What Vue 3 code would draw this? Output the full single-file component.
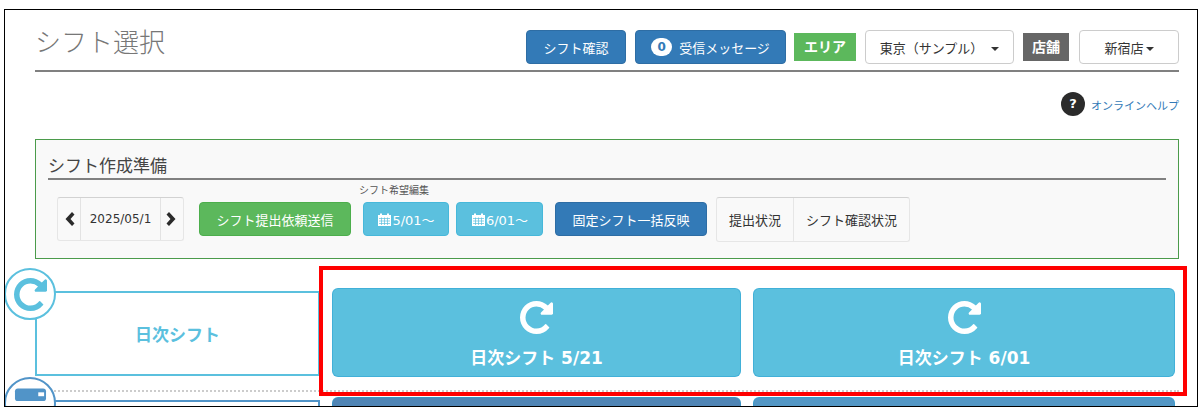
<template>
  <div class="frame">
    <header class="page-head">
      <h1>シフト選択</h1>
      <div class="head-tools">
        <button class="btn primary tool">シフト確認</button>
        <button class="btn primary tool msg"><span class="badge">0</span>受信メッセージ</button>
        <span class="tag green">エリア</span>
        <button class="btn plain area">東京（サンプル）<i class="caret"></i></button>
        <span class="tag gray">店舗</span>
        <button class="btn plain store">新宿店<i class="caret near"></i></button>
      </div>
    </header>

    <div class="help">
      <span class="help-mark">?</span>
      <a class="help-link">オンラインヘルプ</a>
    </div>

    <section class="prep">
      <h2>シフト作成準備</h2>
      <div class="prep-row">
        <div class="pager">
          <span class="cell arrow">
            <svg viewBox="0 0 12 16" width="12" height="16"><path d="M9 1 2.5 8 9 15l2.5-2.5L7.5 8l4-4.500z" /></svg>
          </span>
          <span class="cell date">2025/05/1</span>
          <span class="cell arrow">
            <svg viewBox="0 0 12 16" width="12" height="16"><path d="M3 1 9.500 8 3 15 .5 12.500 4.500 8l-4-4.500z" /></svg>
          </span>
        </div>
        <button class="btn success send">シフト提出依頼送信</button>
        <div class="hope">
          <div class="hope-label">シフト希望編集</div>
          <div class="hope-btns">
            <button v-for="d in hopeDates" :key="d" class="btn info hope-btn">
              <svg class="cal" viewBox="0 0 15 15" width="15" height="15">
                <path d="M1 3h2V1.500h2V3h5V1.500h2V3h2v11H1z" fill="#fff" />
                <path d="M2 6.500h11M2 9h11M2 11.500h11M4.500 5.500V13M7.500 5.500V13M10.500 5.500V13" stroke="#5bc0de" stroke-width=".7" fill="none" />
              </svg>{{ d }}
            </button>
          </div>
        </div>
        <button class="btn primary bulk">固定シフト一括反映</button>
        <div class="status">
          <span class="status-cell first">提出状況</span>
          <span class="status-cell">シフト確認状況</span>
        </div>
      </div>
    </section>

    <div v-for="row in rows" :key="row.name" class="shift-row" :class="row.kind">
      <div class="row-box">
        <span class="row-circle">
          <svg v-if="row.kind === 'daily'" viewBox="128 128 1536 1536" width="33" height="33"><path :d="repeatPath" /></svg>
          <svg v-else viewBox="0 0 34 34" width="33" height="34">
            <rect x="1" y="2" width="32" height="13" rx="3" />
            <rect x="1" y="20" width="32" height="13" rx="3" />
            <rect x="25" y="6" width="6" height="4" fill="#fff" />
            <rect x="17" y="24" width="14" height="4" fill="#fff" />
          </svg>
        </span>
        {{ row.name }}
      </div>
      <button v-for="b in row.buttons" :key="b.label" class="big-btn" :style="{ background: b.color }">
        <svg viewBox="128 128 1536 1536" width="33" height="33"><path :d="repeatPath" fill="#fff" /></svg>
        <span>{{ b.label }}</span>
      </button>
    </div>

    <div class="marker"></div>
  </div>
</template>

<script setup>
const repeatPath = 'M1664 256v448q0 26-19 45t-45 19h-448q-42 0-59-40-17-39 14-69l138-138q-148-137-349-137-104 0-198.500 40.500t-163.500 109.500-109.500 163.500-40.500 198.500 40.500 198.500 109.500 163.500 163.500 109.500 198.500 40.500q119 0 225-52t179-147q7-10 23-12 15 0 25 9l137 138q9 8 9.500 20.500t-7.500 22.500q-109 132-264 204.500t-327 72.500q-156 0-298-61t-245-164-164-245-61-298 61-298 164-245 245-164 298-61q147 0 284.500 55.500t244.500 156.500l130-129q29-31 70-14 39 17 39 59z'

const hopeDates = ['5/01～', '6/01～']

const rows = [
  {
    name: '日次シフト',
    kind: 'daily',
    buttons: [
      { label: '日次シフト 5/21', color: '#5bc0de' },
      { label: '日次シフト 6/01', color: '#5bc0de' }
    ]
  },
  {
    name: '月次シフト',
    kind: 'monthly',
    buttons: [
      { label: '月次シフト 5/01', color: '#5085b5' },
      { label: '月次シフト 6/01', color: '#5397c5' }
    ]
  }
]
</script>

<style>
html, body { background: #fff; overflow: hidden; }
</style>

<style scoped>
.frame {
  position: relative;
  box-sizing: border-box;
  margin: 9px 0 0 4px;
  width: 1194px;
  height: 398px;
  padding: 0 18px 0 30px;
  border: 1px solid #000;
  overflow: hidden;
  font-family: "DejaVu Sans", "Noto Sans CJK JP", sans-serif;
  font-size: 13px;
  color: #333;
}
.page-head {
  display: flex;
  justify-content: space-between;
  margin-top: 20px;
  height: 42px;
  padding-bottom: 6px;
  box-sizing: border-box;
  height: 42px;
  border-bottom: 2px solid #808080;
}
.page-head h1 {
  margin: -2px 0 0;
  font-size: 26px;
  line-height: 30px;
  font-weight: 300;
  letter-spacing: 0;
  color: #777;
}
.head-tools { display: flex; align-items: center; height: 34px; }
.btn {
  box-sizing: border-box;
  height: 34px;
  padding: 0;
  border: 1px solid transparent;
  border-radius: 4px;
  font: inherit;
  color: #fff;
  white-space: nowrap;
}
.primary { background: #337ab7; border-color: #2e6da4; }
.success { background: #5cb85c; border-color: #4cae4c; }
.info { background: #5bc0de; border-color: #46b8da; }
.plain { background: #fff; border-color: #ccc; color: #333; }
.tool { width: 100px; margin-right: 9px; }
.msg { width: 151px; margin-right: 8px; display: flex; align-items: center; justify-content: center; }
.badge {
  width: 21px;
  height: 18px;
  margin-right: 7px;
  border-radius: 10px;
  background: #fff;
  color: #337ab7;
  font-size: 12px;
  font-weight: 700;
  line-height: 18px;
  text-align: center;
}
.tag {
  height: 28px;
  line-height: 28px;
  text-align: center;
  color: #fff;
  font-size: 14px;
  font-weight: 700;
}
.green { width: 62px; background: #5cb85c; margin-right: 9px; }
.gray { width: 46px; background: #666; margin-right: 10px; }
.area { width: 149px; margin-right: 9px; }
.store { width: 100px; }
.caret {
  display: inline-block;
  width: 0;
  height: 0;
  margin-left: 8px;
  vertical-align: middle;
  border-top: 4px solid #333;
  border-left: 4px solid transparent;
  border-right: 4px solid transparent;
}
.caret.near { margin-left: 2px; }
.help {
  display: flex;
  justify-content: flex-end;
  align-items: center;
  gap: 6px;
  margin-top: 20px;
  height: 24px;
}
.help-mark {
  width: 24px;
  height: 24px;
  border-radius: 50%;
  background: #2b2b2b;
  color: #fff;
  font-size: 13px;
  font-weight: 700;
  line-height: 24px;
  text-align: center;
}
.help-link { color: #337ab7; font-size: 11px; margin-top: 2px; }
.prep {
  box-sizing: border-box;
  height: 120px;
  margin-top: 23px;
  padding: 0 12px;
  border: 1px solid #4b9b4b;
  background: #f9f9f9;
}
.prep h2 {
  margin: 15px 0 0;
  height: 23px;
  font-size: 17px;
  line-height: 23px;
  font-weight: 400;
  color: #444;
  border-bottom: 2px solid #808080;
}
.prep-row { display: flex; align-items: flex-start; padding: 0 0 0 9px; }
.pager {
  display: flex;
  height: 44px;
  margin-top: 17px;
  box-sizing: border-box;
  border: 1px solid #e6e6e6;
  border-top-color: #d2d2d2;
  border-radius: 3px;
}
.cell { display: flex; align-items: center; justify-content: center; }
.arrow { width: 22px; color: #333; }
.arrow svg { fill: #2b2b2b; }
.date { width: 79px; border: solid #e3e3e3; border-width: 0 1px; font-size: 12px; }
.send { width: 152px; margin: 22px 0 0 15px; }
.hope { margin-left: 10px; }
.hope-label { height: 22px; padding-top: 4px; box-sizing: border-box; font-size: 10px; line-height: 14px; color: #555; margin-left: -2px; }
.hope-btns { display: flex; gap: 7px; margin-left: 2px; }
.hope-btn { width: 86px; display: flex; align-items: center; justify-content: center; }
.cal { margin-right: 0; }
.hope-btn:last-child { width: 87px; }
.bulk { width: 152px; margin: 22px 0 0 12px; }
.status {
  display: flex;
  height: 45px;
  margin: 17px 0 0 9px;
  box-sizing: border-box;
  border: 1px solid #e6e6e6;
  border-top-color: #d2d2d2;
  border-radius: 3px;
}
.status-cell { display: flex; align-items: center; padding: 0 12px; }
.status-cell.first { border-right: 1px solid #e6e6e6; }
.shift-row {
  display: grid;
  grid-template-columns: 285px 409px 422px;
  gap: 12px;
  padding-bottom: 13px;
  border-bottom: 2px dotted #ccc;
  margin: 0 0 0 0;
}
.shift-row.daily { margin-top: 29px; margin-right: 0; }
.shift-row.monthly { margin-top: 5px; border-bottom: 0; }
.row-box {
  position: relative;
  box-sizing: border-box;
  height: 85px;
  margin-top: 3px;
  border: 2px solid #5bc0de;
  border-left-width: 2px;
  display: flex;
  align-items: center;
  justify-content: center;
  font-size: 17px;
  font-weight: 700;
  color: #5bc0de;
}
.monthly .row-box { border-color: #5194c8; color: #5194c8; }
.row-circle {
  position: absolute;
  left: -33px;
  top: -25px;
  box-sizing: border-box;
  width: 52px;
  height: 52px;
  border: 2px solid #5bc0de;
  border-radius: 50%;
  background: #fff;
  display: flex;
  align-items: center;
  justify-content: center;
}
.row-circle svg { fill: #5bc0de; }
.monthly .row-circle { border-color: #5194c8; }
.monthly .row-circle svg { fill: #5194c8; }
.big-btn {
  box-sizing: border-box;
  height: 89px;
  padding: 12px 0 0;
  border: 1px solid rgba(40, 160, 210, .5);
  border-radius: 6px;
  font: inherit;
  font-size: 17px;
  font-weight: 700;
  color: #fff;
  display: flex;
  flex-direction: column;
  align-items: center;
  gap: 10px;
}
.marker {
  position: absolute;
  left: 314px;
  top: 256px;
  width: 868px;
  height: 130px;
  box-sizing: border-box;
  border: 4px solid #f00;
  pointer-events: none;
}
</style>
